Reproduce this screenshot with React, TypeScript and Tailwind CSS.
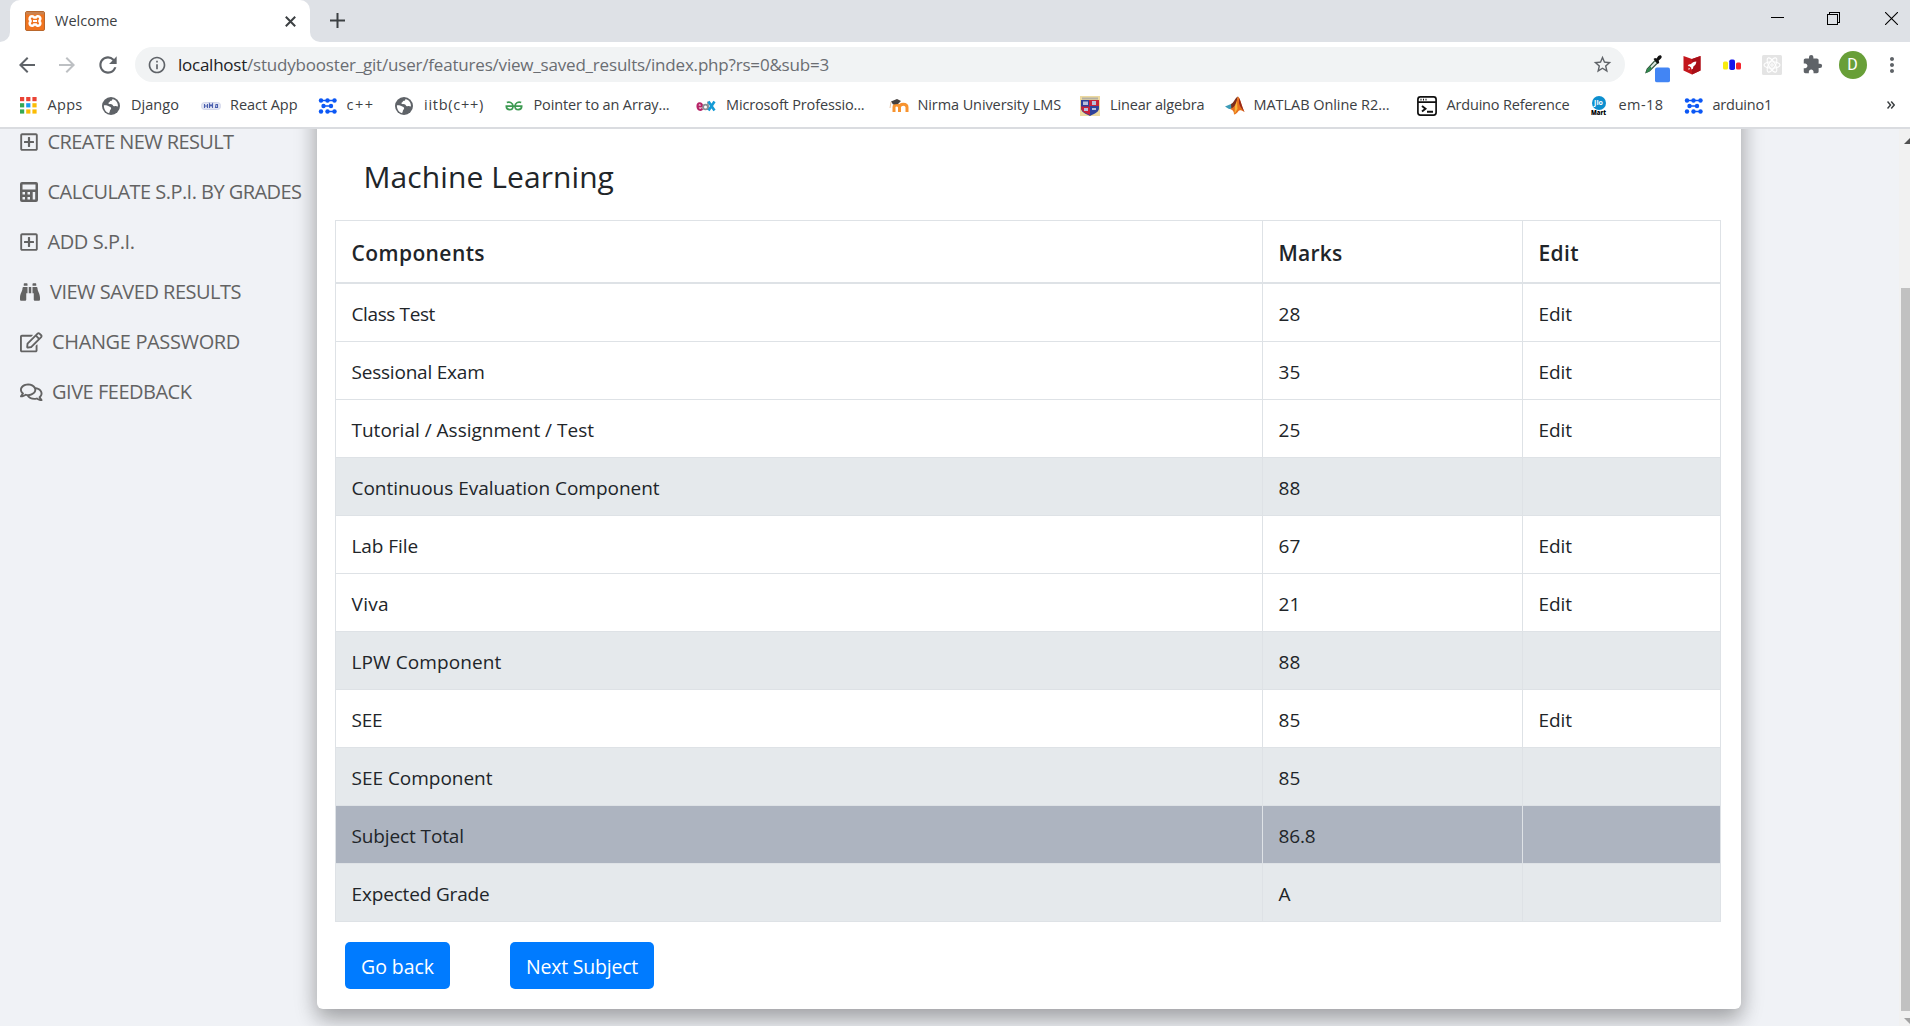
import { useLayoutEffect, useRef, useState, type ReactNode } from "react";
import { FaBinoculars, FaRegComments, FaRegEdit, FaRegPlusSquare } from "react-icons/fa";
import { MdArrowBack, MdArrowForward, MdExtension, MdInfoOutline, MdMoreVert, MdRefresh, MdStarBorder } from "react-icons/md";

// Text tracked so that its run fills the given width.
function Fit({ w, children, className = "" }: { w: number; children: string; className?: string }) {
  const ref = useRef<HTMLSpanElement>(null);
  const [spacing, setSpacing] = useState(0);
  useLayoutEffect(() => {
    const natural = ref.current!.getBoundingClientRect().width;
    setSpacing((w - natural) / children.length);
  }, [w, children]);
  return (
    <span ref={ref} className={`inline-block whitespace-pre ${className}`} style={{ letterSpacing: `${spacing}px` }}>
      {children}
    </span>
  );
}

function DotsIcon() {
  return (
    <svg width="20" height="16" viewBox="0 0 20 16" fill="#0b57f5" stroke="#0b57f5" strokeWidth="1.6">
      <path d="M3 2.5h6M9.500 2.500h7M5 8h9M8 13.500h8" />
      <g stroke="none">
        <circle cx="3" cy="2.5" r="2.200" /><circle cx="9.5" cy="2.5" r="2.200" /><circle cx="16.5" cy="2.5" r="2.200" />
        <circle cx="5.5" cy="8" r="2.200" /><circle cx="13" cy="8" r="2.200" />
        <circle cx="3" cy="13.5" r="2.200" /><circle cx="9.5" cy="13.5" r="2.200" /><circle cx="16.5" cy="13.5" r="2.200" />
      </g>
    </svg>
  );
}

function AppsIcon() {
  const colors = ["#ea4335", "#ea4335", "#ea4335", "#34a853", "#1a9bf0", "#fbbc04", "#34a853", "#fbbc04", "#fbbc04"];
  return (
    <svg width="17" height="17" viewBox="0 0 17 17">
      {colors.map((c, i) => (
        <rect key={i} x={(i % 3) * 6.2} y={Math.floor(i / 3) * 6.2} width="4.2" height="4.2" fill={c} />
      ))}
    </svg>
  );
}

function GlobeIcon() {
  return (
    <svg width="18" height="18" viewBox="0 0 18 18">
      <circle cx="9" cy="9" r="9" fill="#5f6368" />
      <path d="M10.500 1.900c-.2 1.300-.6 1.800-1.700 1.900-1 .1-.9 1.300-1.800 1.600-1 .3-.6 1.300.2 1.600 1.300.3 3 0 3.600 1.300.4 1 1.300 1 2.200.7 1-.4 1.700.3 2.900.4C16.300 5.700 14 2.700 10.500 1.900z" fill="#fff" />
      <path d="M1.900 8.300c1.700 0 3.300-.2 4.400.8 1 .8 2.500.8 2.800 2 .3 1.400-1 1.600-1.200 2.700-.1 1-.6 1.500-.7 2.400C4 15.500 1.700 12.400 1.900 8.300z" fill="#fff" />
    </svg>
  );
}

function CalculatorIcon() {
  return (
    <svg width="18" height="20" viewBox="0 0 18 20">
      <path
        fill="currentColor"
        fillRule="evenodd"
        d="M2 0h14a2 2 0 0 1 2 2v16a2 2 0 0 1-2 2H2a2 2 0 0 1-2-2V2a2 2 0 0 1 2-2zM2.500 2.500V7.500h13V2.500zM2.500 10v2.500H5V10zM7.500 10v2.500H10V10zM12.700 10v7.500h2.500V10zM2.500 15v2.500H5V15zM7.500 15v2.500H10V15z"
      />
    </svg>
  );
}

function XamppIcon() {
  return (
    <svg width="20" height="20" viewBox="0 0 20 20">
      <rect x="0.5" y="0.5" width="19" height="19" rx="1.5" fill="#f0741f" stroke="#b9672c" />
      <path d="M1 1h18v2.500H1z" fill="#c98250" />
      <path d="M7 5.200a2.400 2.400 0 0 0-1.500 4.300v1a2.400 2.400 0 1 0 3.700 2.900h1.600a2.400 2.400 0 1 0 3.700-2.900v-1a2.400 2.400 0 1 0-3.700-2.900H9.200A2.400 2.400 0 0 0 7 5.200z" fill="none" stroke="#fff" strokeWidth="2.500" />
      <path d="M8 10h4" stroke="#fff" strokeWidth="2" />
    </svg>
  );
}

function ReactAppIcon() {
  return (
    <svg width="20" height="8" viewBox="0 0 20 8">
      <rect x="0.500" y="0.500" width="19" height="7" rx="3" fill="#e3e6f4" stroke="#d3d7ea" />
      <path d="M3.500 2v4M6.500 2v4M3.500 4h3M8.500 6V2l1.500 2 1.500-2v4M15 2.500h1.500v3H14.500z" fill="none" stroke="#4a5fae" strokeWidth="1.100" />
    </svg>
  );
}

function GeeksIcon() {
  return (
    <svg width="18" height="10" viewBox="0 0 18 10" fill="none" stroke="#3d9a52" strokeWidth="1.700">
      <path d="M.5 5.200h17M1.800 1.500C4.500.3 8 1.800 8 5.200 8 9.800 1.500 9.800 1.300 5.400M16.200 1.500C13.500.3 10 1.800 10 5.200c0 4.600 6.500 4.600 6.700.2" />
    </svg>
  );
}

function EdxIcon() {
  return (
    <svg width="20" height="12" viewBox="0 0 20 12" fill="none">
      <path d="M1.500 6.500h4.700C6 2 1.300 2.500 1.500 6.500c.2 4 3.800 4 5 2" stroke="#b72467" strokeWidth="2.100" />
      <circle cx="9.500" cy="7" r="2.400" stroke="#8b8f93" strokeWidth="1.800" />
      <path d="M12 1.500v8.500" stroke="#8b8f93" strokeWidth="1.600" />
      <path d="M12.500 1.500l6 9M18.500 1.500l-6 9" stroke="#159bd6" strokeWidth="2.600" />
    </svg>
  );
}

function MoodleIcon() {
  return (
    <svg width="20" height="14" viewBox="0 0 20 14">
      <path d="M5 13V8.200c0-3 5-3 5.500 0V13M10.500 13V8.200c0-4 7.500-4 7.500 0V13" fill="none" stroke="#f7932f" strokeWidth="3" />
      <path d="M2 2.500L8 0l4 2-3 3-5 .6z" fill="#44403f" />
      <path d="M2 3L1 9" stroke="#e8c4a4" strokeWidth="1" />
    </svg>
  );
}

function CrestIcon() {
  return (
    <svg width="20" height="20" viewBox="0 0 20 20">
      <path d="M0 0h20v20H0z" fill="#ecd9a0" />
      <path d="M2 1.500h16v2H2z" fill="#b5b0a2" />
      <path d="M1 4h18v8c0 4-4 5.500-9 8-5-2.500-9-4-9-8z" fill="#2e4199" />
      <path d="M9 4h10v6H9zM1 10.500h9V19C5 17 1 15.500 1 11z" fill="#c62339" />
      <path d="M3 5.500h5v3.500H3zM12 5h4v4h-4zM4 12h4v3H4zM12 12h4v2h-4z" fill="#b9bfdc" />
    </svg>
  );
}

function MatlabIcon() {
  return (
    <svg width="20" height="19" viewBox="0 0 20 19">
      <path d="M0 10.500L6 8l3-1-2.500 6L4 13z" fill="#3d9cb8" />
      <path d="M6 8c3-1 4.500-7 7-7.500L11 10l-4.500 3.500z" fill="#7c2d1c" />
      <path d="M13 .5c2 1 3.500 9 6.500 15.500-3-2-5-2.500-6-1-1.500 2-3 3.500-4.500 3.500 0-3-1-4.500-4-5.500l3-1.500c3-2 3.500-7 5-11z" fill="#e8701c" />
      <path d="M10 10l2-5 .5 8-3 5z" fill="#f6b53a" />
      <path d="M14 2c1.500 2 3 9 5.500 14-3-4-4.500-5-5.500-9z" fill="#96281b" />
    </svg>
  );
}

function TerminalIcon() {
  return (
    <svg width="20" height="20" viewBox="0 0 20 20" fill="none" stroke="#111" strokeWidth="1.700">
      <rect x="0.900" y="0.900" width="18.200" height="18.200" rx="2.500" />
      <path d="M1 6.200h18M3.500 3.600h1M6 3.600h1M8.500 3.600h1" />
      <path d="M5 10l3.500 2.700L5 15.500M10 15.800h6" strokeWidth="1.900" />
    </svg>
  );
}

function JioIcon() {
  return (
    <span className="flex w-4 flex-col items-center">
      <span className="flex h-[14px] w-[14px] items-center justify-center rounded-full bg-[#0d8fcf] text-[7px] leading-none font-bold text-white">Jio</span>
      <span className="text-[6px] leading-[6px] font-extrabold text-black">Mart</span>
    </span>
  );
}

function DropperIcon() {
  return (
    <svg width="25" height="28" viewBox="0 0 25 28">
      <path d="M1 18l1.200-3.500L10 6l2.500 2.500-8 8z" fill="#dfe9e2" stroke="#35543f" strokeWidth="1.200" />
      <path d="M1 18.500l1.300-3.800 3-3 1.500 2-3.500 3.800z" fill="#2d8a4d" />
      <path d="M8.500 4.500l1.500-1 1.500.6C13 1.500 14.500.3 16 1c1.500 1 .7 3-2.300 5l.5 2.200-1.400 1.200z" fill="#111" />
      <rect x="10" y="13" width="15" height="15" rx="2" fill="#4285f4" />
    </svg>
  );
}

function ShieldIcon() {
  return (
    <svg width="18" height="20" viewBox="0 0 18 20">
      <path d="M.5 1L9 4l8.500-3v14.500L9 19.500.5 15.500z" fill="#c4161c" />
      <path d="M9 4l8.500-3v14.500L9 19.500z" fill="#a80f18" />
      <path d="M13.300 6.500c-2.600 0-4 .9-5.300 2.600l-2.300.3-.9 1.500 1.800.3 1.600 1.600.2 1.800 1.500-.9.500-2.200c1.800-1.300 2.900-2.600 2.900-5zM5.800 12.800l-.5 1.900 1.900-.6z" fill="#fff" />
    </svg>
  );
}

function BarsIcon() {
  return (
    <svg width="19" height="12" viewBox="0 0 19 12">
      <rect x="0" y="2.500" width="5" height="8" rx="1.500" fill="#f8ec13" />
      <rect x="6.300" y="0.500" width="5.700" height="10.500" rx="1.800" fill="#1515ee" />
      <rect x="13" y="3.500" width="5" height="7" rx="1.500" fill="#f5242e" />
    </svg>
  );
}

function AtomIcon() {
  return (
    <svg width="20" height="20" viewBox="0 0 20 20">
      <rect width="20" height="20" rx="1.500" fill="#e4e4e4" />
      <g fill="none" stroke="#fff" strokeWidth="1.100">
        <ellipse cx="10" cy="10" rx="8" ry="3.200" />
        <ellipse cx="10" cy="10" rx="8" ry="3.200" transform="rotate(60 10 10)" />
        <ellipse cx="10" cy="10" rx="8" ry="3.200" transform="rotate(120 10 10)" />
        <circle cx="10" cy="10" r="1.200" />
      </g>
    </svg>
  );
}

type Bookmark = { icon: ReactNode; box: string; label: string; w: number };
const bookmarks: Bookmark[] = [
  { icon: <AppsIcon />, box: "ml-[19.500px] w-[28px]", label: "Apps", w: 35 },
  { icon: <GlobeIcon />, box: "ml-[19.500px] w-[29px]", label: "Django", w: 48 },
  { icon: <ReactAppIcon />, box: "ml-[21.500px] w-[29.500px]", label: "React App", w: 67.5 },
  { icon: <DotsIcon />, box: "ml-[20px] w-[29px]", label: "c++", w: 28 },
  { icon: <GlobeIcon />, box: "ml-[20px] w-[29.500px]", label: "iitb(c++)", w: 60 },
  { icon: <GeeksIcon />, box: "ml-[21px] w-[28.500px]", label: "Pointer to an Array...", w: 136 },
  { icon: <EdxIcon />, box: "ml-[26px] w-[30.500px]", label: "Microsoft Professio...", w: 138.5 },
  { icon: <MoodleIcon />, box: "ml-[24px] w-[29px]", label: "Nirma University LMS", w: 143.5 },
  { icon: <CrestIcon />, box: "ml-[19px] w-[30px]", label: "Linear algebra", w: 94.5 },
  { icon: <MatlabIcon />, box: "ml-[20px] w-[29px]", label: "MATLAB Online R2...", w: 136 },
  { icon: <TerminalIcon />, box: "ml-[27px] w-[30px]", label: "Arduino Reference", w: 123 },
  { icon: <JioIcon />, box: "ml-[21px] w-[28px]", label: "em-18", w: 45 },
  { icon: <DotsIcon />, box: "ml-[20px] w-[29px]", label: "arduino1", w: 59.5 },
];

const menu = [
  { icon: <FaRegPlusSquare size={20} className="-ml-px" />, box: "w-[27.500px]", label: "CREATE NEW RESULT", w: 186 },
  { icon: <CalculatorIcon />, box: "w-[27.500px]", label: "CALCULATE S.P.I. BY GRADES", w: 254 },
  { icon: <FaRegPlusSquare size={20} className="-ml-px" />, box: "w-[27.500px]", label: "ADD S.P.I.", w: 87 },
  { icon: <FaBinoculars size={20} />, box: "w-[30px]", label: "VIEW SAVED RESULTS", w: 191 },
  { icon: <FaRegEdit size={22.5} />, box: "w-[32px]", label: "CHANGE PASSWORD", w: 188 },
  { icon: <FaRegComments size={22.5} />, box: "w-[32px]", label: "GIVE FEEDBACK", w: 139.5 },
];

const rows = [
  { name: "Class Test", w: 83.5, mark: "28", mw: 22, edit: true, bg: "bg-white" },
  { name: "Sessional Exam", w: 133, mark: "35", mw: 22, edit: true, bg: "bg-white" },
  { name: "Tutorial / Assignment / Test", w: 242.5, mark: "25", mw: 22, edit: true, bg: "bg-white" },
  { name: "Continuous Evaluation Component", w: 308, mark: "88", mw: 22, edit: false, bg: "bg-[#e5e9ec]" },
  { name: "Lab File", w: 66.5, mark: "67", mw: 22, edit: true, bg: "bg-white" },
  { name: "Viva", w: 37.5, mark: "21", mw: 22, edit: true, bg: "bg-white" },
  { name: "LPW Component", w: 150, mark: "88", mw: 22, edit: false, bg: "bg-[#e5e9ec]" },
  { name: "SEE", w: 31, mark: "85", mw: 22, edit: true, bg: "bg-white" },
  { name: "SEE Component", w: 141, mark: "85", mw: 22, edit: false, bg: "bg-[#e5e9ec]" },
  { name: "Subject Total", w: 112.5, mark: "86.8", mw: 37, edit: false, bg: "bg-[#adb4c0]" },
  { name: "Expected Grade", w: 138, mark: "A", mw: 13, edit: false, bg: "bg-[#e5e9ec]" },
];

function TabStrip() {
  return (
    <div className="flex h-[42px] items-start bg-[#dee1e6]">
      <div className="flex h-full w-[10px] bg-white">
        <div className="h-full w-full rounded-br-[10px] bg-[#dee1e6]" />
      </div>
      <div className="flex h-full w-[300px] bg-[#dee1e6]">
        <div className="flex h-full w-full items-center rounded-t-[10px] bg-white pl-[15px]">
          <XamppIcon />
          <Fit w={62.5} className="ml-[10px] text-[14.5px] text-[#3c4043]">Welcome</Fit>
          <svg className="mr-[14.500px] ml-auto" width="11" height="11" viewBox="0 0 11 11" stroke="#3c4043" strokeWidth="2">
            <path d="M.8.8l9.400 9.400M10.200.8L.8 10.200" />
          </svg>
        </div>
      </div>
      <div className="h-full w-[10px] bg-white">
        <div className="h-full w-full rounded-bl-[10px] bg-[#dee1e6]" />
      </div>
      <svg className="mt-[13px] ml-[10px]" width="15" height="15" viewBox="0 0 15 15" stroke="#3c4043" strokeWidth="2">
        <path d="M7.500 0v15M0 7.500h15" />
      </svg>
      <div className="mt-3 mr-[12px] ml-auto flex h-[13px]">
        <svg width="13" height="13" viewBox="0 0 13 13" stroke="#000" shapeRendering="crispEdges"><path d="M0 5.500h13" /></svg>
        <svg className="ml-[43px]" width="13" height="13" viewBox="0 0 13 13" fill="none" stroke="#000" shapeRendering="crispEdges"><path d="M.5 2.500h10v10H.5zM2.500 2.500v-2h10v10h-2" /></svg>
        <svg className="ml-[45px]" width="13" height="13" viewBox="0 0 13 13" stroke="#000" strokeWidth="1.100"><path d="M0 0l13 13M13 0L0 13" /></svg>
      </div>
    </div>
  );
}

function Toolbar() {
  return (
    <div className="flex h-[45px] items-center bg-white text-[#5f6368]">
      <MdArrowBack className="ml-[15px] h-6 w-6" />
      <MdArrowForward className="ml-4 h-6 w-6 text-[#bdc0c3]" />
      <MdRefresh className="ml-[15.500px] h-[26px] w-[26px]" />
      <div className="ml-[14.500px] flex h-[35px] w-[1490px] items-center rounded-full bg-[#f1f3f4]">
        <MdInfoOutline className="ml-3 h-5 w-5" />
        <Fit w={69} className="ml-[11px] text-[17px] text-[#202124]">localhost</Fit>
        <Fit w={582} className="text-[17px] text-[#6a6d72]">/studybooster_git/user/features/view_saved_results/index.php?rs=0&amp;sub=3</Fit>
        <MdStarBorder className="mr-[12px] ml-auto h-[21px] w-[21px]" />
      </div>
      <div className="ml-[20px] flex h-7 w-[25px] translate-y-[3.500px] items-end"><DropperIcon /></div>
      <div className="ml-[13px]"><ShieldIcon /></div>
      <div className="ml-[22px]"><BarsIcon /></div>
      <div className="ml-[20px]"><AtomIcon /></div>
      <MdExtension className="ml-5 h-[21px] w-[21px]" />
      <div className="ml-[15.500px] flex h-7 w-7 items-center justify-center rounded-full bg-[#689f38] font-[Roboto,sans-serif] text-[16px] text-white">D</div>
      <MdMoreVert className="ml-[13px] h-6 w-6 shrink-0" />
    </div>
  );
}

function BookmarkBar() {
  return (
    <div className="flex h-[42px] items-center border-b-2 border-[#dadce0] bg-white pb-[5px] text-[14.5px] text-[#3c4043]">
      {bookmarks.map((b) => (
        <div key={b.label} className="flex shrink-0 items-center">
          <span className={`flex shrink-0 items-center pt-0.5 ${b.box}`}>{b.icon}</span>
          <Fit w={b.w}>{b.label}</Fit>
        </div>
      ))}
      <svg className="mr-[15px] ml-auto shrink-0" width="8" height="8" viewBox="0 0 8 8" fill="none" stroke="#3c4043" strokeWidth="1.500">
        <path d="M.5.5L3.500 4l-3 3.500M4.200.5L7.200 4l-3 3.500" />
      </svg>
    </div>
  );
}

function Sidebar() {
  return (
    <nav className="-mt-[12px] w-[317px] shrink-0 text-[#636363]">
      {menu.map((m) => (
        <div key={m.label} className="flex h-[50px] items-center pl-5">
          <span className={`flex shrink-0 ${m.box}`}>{m.icon}</span>
          <Fit w={m.w} className="text-[20px]">{m.label}</Fit>
        </div>
      ))}
    </nav>
  );
}

const head = "h-[64px] border-y border-l border-b-2 border-[#dee2e6] px-[15.500px] pt-1 text-left text-[21px] font-semibold";
const cell = "h-[58px] border-b border-l border-[#dee2e6] px-[15.500px] pt-[3px] text-[19px]";

// The page is scrolled, so the card's top edge lies above the visible area.
function Card() {
  return (
    <main className="-mt-16 h-[944px] w-[1424px] shrink-0 rounded-[6px] bg-white px-[18px] pt-16 text-[#212529] shadow-[0_10px_20px_rgba(0,0,0,0.2),0_7.5px_25px_rgba(0,0,0,0.19)]">
      <h1 className="flex h-[91px] items-center pt-[4px] pl-[28.500px] text-[30px] leading-none">
        <Fit w={250.5}>Machine Learning</Fit>
      </h1>
      <table className="w-[1386px] table-fixed border-separate border-spacing-0">
        <colgroup>
          <col className="w-[927px]" />
          <col className="w-[260px]" />
          <col className="w-[199px]" />
        </colgroup>
        <thead>
          <tr>
            <th className={head}><Fit w={133.5}>Components</Fit></th>
            <th className={head}><Fit w={64}>Marks</Fit></th>
            <th className={`${head} border-r`}><Fit w={40.5}>Edit</Fit></th>
          </tr>
        </thead>
        <tbody>
          {rows.map((r) => (
            <tr key={r.name} className={r.bg}>
              <td className={cell}><Fit w={r.w}>{r.name}</Fit></td>
              <td className={cell}><Fit w={r.mw}>{r.mark}</Fit></td>
              <td className={`${cell} border-r`}>{r.edit && <Fit w={33.5}>Edit</Fit>}</td>
            </tr>
          ))}
        </tbody>
      </table>
      <div className="mt-5 ml-[10px] flex gap-[60px] text-[19.5px] text-white">
        <button className="flex h-[47px] w-[105px] items-center justify-center rounded-[5px] bg-[#007bff] pt-0.5"><Fit w={73}>Go back</Fit></button>
        <button className="flex h-[47px] w-[144px] items-center justify-center rounded-[5px] bg-[#007bff] pt-0.5"><Fit w={112}>Next Subject</Fit></button>
      </div>
    </main>
  );
}

function Scrollbar() {
  return (
    <div className="ml-auto flex w-[11px] shrink-0 flex-col overflow-hidden bg-[#f1f1f1] pl-0.5">
      <svg className="mt-[9px] ml-[3px] shrink-0" width="12" height="6" viewBox="0 0 12 6" fill="#505050"><path d="M0 6l6-6 6 6z" /></svg>
      <div className="mt-[144px] h-[723px] w-full shrink-0 bg-[#c1c1c1]" />
      <svg className="mt-[7px] ml-[3px] shrink-0" width="12" height="6" viewBox="0 0 12 6" fill="#a3a3a3"><path d="M0 0l6 6 6-6z" /></svg>
    </div>
  );
}

export default function App() {
  return (
    <div className="flex h-[1026px] w-[1910px] flex-col overflow-hidden font-['Open_Sans','Noto_Sans',sans-serif]">
      <TabStrip />
      <Toolbar />
      <BookmarkBar />
      <div className="flex h-[897px] overflow-hidden bg-[#f0f2f6]">
        <Sidebar />
        <Card />
        <Scrollbar />
      </div>
    </div>
  );
}
